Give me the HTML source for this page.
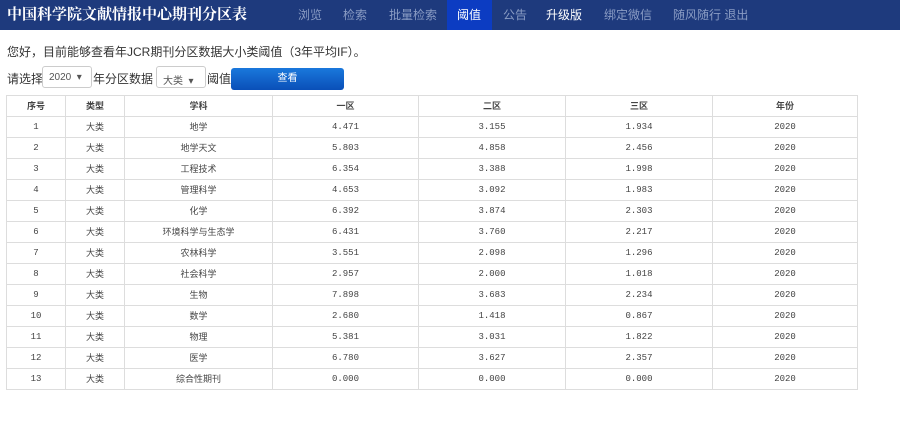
<!DOCTYPE html>
<html><head><meta charset="utf-8"><style>
*{margin:0;padding:0;box-sizing:border-box}
body{width:900px;height:441px;background:#fff;font-family:"Liberation Sans","Noto Sans CJK SC",sans-serif;color:#333;position:relative;overflow:hidden}
.nav{position:absolute;left:0;top:0;width:900px;height:30px;background:#1e3a7d}
.title{position:absolute;left:7px;top:5px;font-size:15px;line-height:18px;color:#fff;font-family:"Noto Serif CJK SC",serif;font-weight:bold;white-space:nowrap}
.nav span{position:absolute;top:8px;font-size:12px;line-height:14px;color:#8a9cc4}
.act{position:absolute;left:447px;top:0;width:45px;height:30px;background:#0c3cc2}
.p1{position:absolute;left:7px;top:43px;font-size:12px}
.p2{position:absolute;left:7px;top:70px;font-size:12px}
.sel{position:absolute;top:66px;height:22px;border:1px solid #ccc;border-radius:3px;font-size:10px;color:#555;padding:5px 0 0 6px;background:#fff}
.btn{position:absolute;left:231px;top:68px;width:113px;height:22px;border-radius:3px;background:linear-gradient(#1a78dc,#0a4fb8);color:#fff;font-size:10px;text-align:center;line-height:22px}
table{position:absolute;left:6px;top:95px;width:852px;border-collapse:collapse;font-size:9px;color:#444}
td,th{border:1px solid #ddd;height:21px;line-height:12px;padding:0;text-align:center;vertical-align:middle;font-weight:normal;font-family:"Liberation Sans","Noto Sans CJK SC",sans-serif}
td.n{font-family:"Liberation Mono",monospace}
th{font-weight:bold}
</style></head><body>
<div class="nav"><div class="title">中国科学院文献情报中心期刊分区表</div>
<span style="left:298px">浏览</span><span style="left:343px">检索</span><span style="left:389px">批量检索</span>
<div class="act"></div><span style="left:457px;color:#fff">阈值</span><span style="left:503px">公告</span><span style="left:546px;color:#fff">升级版</span><span style="left:604px">绑定微信</span><span style="left:673px">随风随行 退出</span></div>
<div class="p1">您好，目前能够查看年JCR期刊分区数据大小类阈值（3年平均IF）。</div>
<div class="p2">请选择</div>
<div class="sel" style="left:42px;width:50px">2020 &nbsp;▾</div>
<div style="position:absolute;left:93px;top:70px;font-size:12px">年分区数据</div>
<div class="sel" style="left:156px;width:50px">大类 &nbsp;▾</div>
<div style="position:absolute;left:207px;top:70px;font-size:12px">阈值</div>
<div class="btn">查看</div>
<table>
<colgroup><col style="width:59px"><col style="width:59px"><col style="width:148px"><col style="width:146px"><col style="width:147px"><col style="width:147px"><col></colgroup>
<tr><th>序号</th><th>类型</th><th>学科</th><th>一区</th><th>二区</th><th>三区</th><th>年份</th></tr>
<tr><td class="n">1</td><td>大类</td><td>地学</td><td class="n">4.471</td><td class="n">3.155</td><td class="n">1.934</td><td class="n">2020</td></tr>
<tr><td class="n">2</td><td>大类</td><td>地学天文</td><td class="n">5.803</td><td class="n">4.858</td><td class="n">2.456</td><td class="n">2020</td></tr>
<tr><td class="n">3</td><td>大类</td><td>工程技术</td><td class="n">6.354</td><td class="n">3.388</td><td class="n">1.998</td><td class="n">2020</td></tr>
<tr><td class="n">4</td><td>大类</td><td>管理科学</td><td class="n">4.653</td><td class="n">3.092</td><td class="n">1.983</td><td class="n">2020</td></tr>
<tr><td class="n">5</td><td>大类</td><td>化学</td><td class="n">6.392</td><td class="n">3.874</td><td class="n">2.303</td><td class="n">2020</td></tr>
<tr><td class="n">6</td><td>大类</td><td>环境科学与生态学</td><td class="n">6.431</td><td class="n">3.760</td><td class="n">2.217</td><td class="n">2020</td></tr>
<tr><td class="n">7</td><td>大类</td><td>农林科学</td><td class="n">3.551</td><td class="n">2.098</td><td class="n">1.296</td><td class="n">2020</td></tr>
<tr><td class="n">8</td><td>大类</td><td>社会科学</td><td class="n">2.957</td><td class="n">2.000</td><td class="n">1.018</td><td class="n">2020</td></tr>
<tr><td class="n">9</td><td>大类</td><td>生物</td><td class="n">7.898</td><td class="n">3.683</td><td class="n">2.234</td><td class="n">2020</td></tr>
<tr><td class="n">10</td><td>大类</td><td>数学</td><td class="n">2.680</td><td class="n">1.418</td><td class="n">0.867</td><td class="n">2020</td></tr>
<tr><td class="n">11</td><td>大类</td><td>物理</td><td class="n">5.381</td><td class="n">3.031</td><td class="n">1.822</td><td class="n">2020</td></tr>
<tr><td class="n">12</td><td>大类</td><td>医学</td><td class="n">6.780</td><td class="n">3.627</td><td class="n">2.357</td><td class="n">2020</td></tr>
<tr><td class="n">13</td><td>大类</td><td>综合性期刊</td><td class="n">0.000</td><td class="n">0.000</td><td class="n">0.000</td><td class="n">2020</td></tr>
</table>
</body></html>
